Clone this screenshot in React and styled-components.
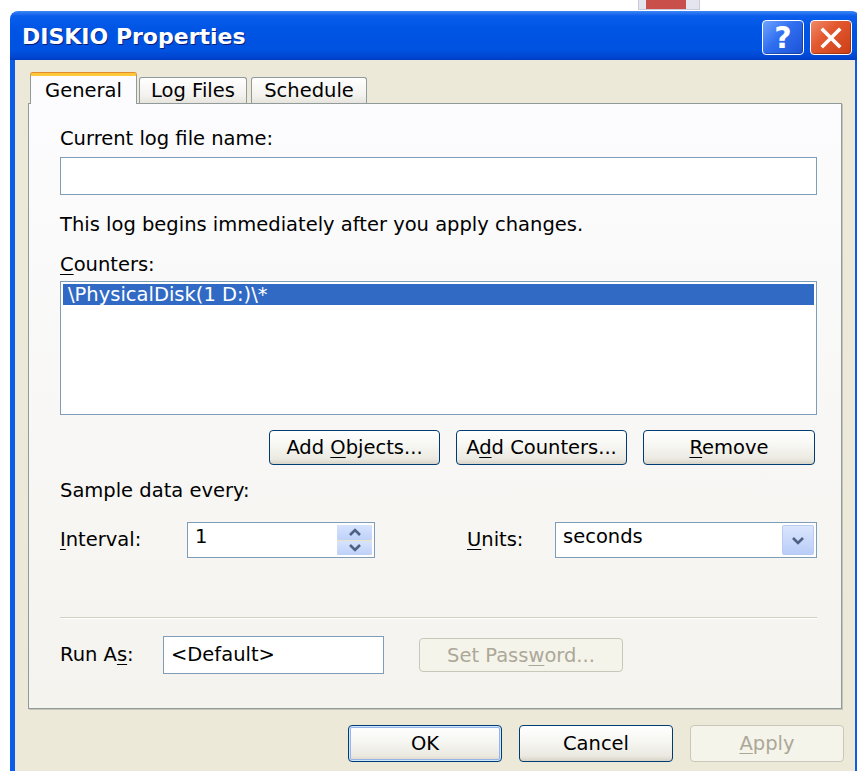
import { createGlobalStyle, styled } from "styled-components";

const GlobalStyle = createGlobalStyle`
  html, body {
    margin: 0;
    padding: 0;
    background: #ffffff;
    overflow: hidden;
  }
  body {
    font-family: "DejaVu Sans", Tahoma, sans-serif;
    font-size: 19.5px;
    color: #000000;
  }
  * {
    box-sizing: border-box;
  }
`;

const Desktop = styled.div`
  width: 857px;
  height: 771px;
  overflow: hidden;
  display: flex;
  flex-direction: column;
  background: #ffffff;
`;

const BackStrip = styled.div`
  height: 11px;
  display: flex;
  align-items: flex-start;
`;

// corner of another window peeking out behind the dialog
const BackWindow = styled.div`
  margin-left: 638px;
  width: 62px;
  height: 10px;
  border: 1px solid #c9cbd9;
  border-top: none;
  background: linear-gradient(
    to right,
    #e4e5ee 0 7px,
    #c9504a 7px 47px,
    #e4e5ee 47px
  );
`;

const Window = styled.div`
  margin-left: 10px;
  width: 850px;
  flex: 1;
  display: flex;
  flex-direction: column;
  border-radius: 8px 8px 0 0;
  overflow: hidden;
`;

const TitleBar = styled.div`
  height: 49px;
  display: flex;
  align-items: center;
  padding: 0 8px 0 12px;
  background: linear-gradient(
    #3d86f4 0%,
    #0b5eec 10%,
    #0055e5 35%,
    #0052e0 80%,
    #0046d2 94%,
    #003cc2 100%
  );
`;

const Title = styled.div`
  flex: 1;
  font-family: "DejaVu Sans", "Trebuchet MS", sans-serif;
  font-weight: bold;
  font-size: 22px;
  color: #ffffff;
  text-shadow: 1px 1px 0 #0a1d7a;
  padding-top: 2px;
`;

const CaptionButtons = styled.div`
  display: flex;
  gap: 6px;
  padding-top: 4px;
`;

const CaptionButton = styled.div`
  width: 42px;
  height: 35px;
  border: 1px solid #ffffff;
  border-radius: 4px;
  display: flex;
  align-items: center;
  justify-content: center;
  color: #ffffff;
  font-weight: bold;
  font-size: 30px;
  font-family: "DejaVu Sans", sans-serif;
  background: ${(p) =>
    p.$close
      ? "linear-gradient(135deg, #f08a6a 0%, #e2582f 40%, #cc3f16 100%)"
      : "linear-gradient(135deg, #6fa3ff 0%, #2f6ef0 45%, #1c52d6 100%)"};
  box-shadow: inset -1px -1px 0 rgba(0, 0, 0, 0.25);
`;

const Body = styled.div`
  flex: 1;
  display: flex;
  flex-direction: column;
  background: #ece9d8;
  border-left: 5px solid #0b5de8;
  border-right: 5px solid #0b5de8;
  padding: 13px 13px 0 13px;
`;

const TabStrip = styled.div`
  height: 31px;
  margin-bottom: -1px;
  display: flex;
  align-items: flex-end;
  padding-left: 2px;
  position: relative;
  z-index: 1;
`;

const Tab = styled.div`
  width: ${(p) => p.$width}px;
  margin-left: ${(p) => p.$gap || 0}px;
  height: ${(p) => (p.$active ? 31 : 26)}px;
  margin-bottom: ${(p) => (p.$active ? 0 : 1)}px;
  border: 1px solid #919b9c;
  border-bottom: none;
  border-radius: 3px 3px 0 0;
  display: flex;
  align-items: center;
  justify-content: center;
  padding-top: ${(p) => (p.$active ? 1 : 0)}px;
  background: ${(p) =>
    p.$active ? "#fcfcfe" : "linear-gradient(#ffffff, #f3f2ee 70%, #e6e4dc)"};
  border-top: ${(p) =>
    p.$active ? "3px solid #ffc83c" : "1px solid #919b9c"};
  box-shadow: ${(p) => (p.$active ? "0 -1px 0 #e68b2c" : "none")};
`;

const Panel = styled.div`
  border: 1px solid #919b9c;
  box-shadow: 1px 1px 0 #c6c4b6;
  background: linear-gradient(#fcfcfe, #f4f3ee);
  padding: 24px 24px 34px 31px;
  display: flex;
  flex-direction: column;
`;

const Label = styled.div`
  line-height: 22px;
  height: 22px;
  margin-top: ${(p) => p.$mt || 0}px;
  white-space: nowrap;
`;

const Key = styled.span`
  text-decoration: underline;
  text-underline-offset: 3px;
  text-decoration-thickness: 1px;
`;

const TextBox = styled.div`
  height: 38px;
  width: ${(p) => (p.$width ? `${p.$width}px` : "100%")};
  margin-top: ${(p) => p.$mt || 0}px;
  border: 1px solid #7f9db9;
  background: #ffffff;
  display: flex;
  align-items: center;
  padding-left: 7px;
  line-height: 22px;
`;

const ListBox = styled.div`
  height: 134px;
  margin-top: 5px;
  border: 1px solid #7f9db9;
  background: #ffffff;
  padding: 2px;
`;

const ListItem = styled.div`
  height: 21px;
  line-height: 21px;
  padding-left: 5px;
  color: ${(p) => (p.$selected ? "#ffffff" : "#000000")};
  background: ${(p) => (p.$selected ? "#316ac5" : "transparent")};
`;

const ButtonRow = styled.div`
  display: flex;
  justify-content: flex-end;
  gap: ${(p) => p.$gap || 16}px;
  margin-top: ${(p) => p.$mt || 0}px;
  margin-right: ${(p) => p.$mr || 0}px;
`;

const Button = styled.button`
  width: ${(p) => p.$width}px;
  height: ${(p) => p.$height || 35}px;
  padding: 0;
  font: inherit;
  color: ${(p) => (p.disabled ? "#aca899" : "#000000")};
  border: 1px solid ${(p) => (p.disabled ? "#c9c7ba" : "#003c74")};
  border-radius: 4px;
  background: ${(p) =>
    p.disabled
      ? "#f5f4ea"
      : "linear-gradient(#ffffff, #f6f6f2 45%, #ebe9e1 85%, #d8d3c7)"};
  box-shadow: ${(p) =>
    p.$default
      ? "inset 0 0 0 1px #cee7ff, inset 0 0 0 2px #98b4e6"
      : "none"};
`;

const Row = styled.div`
  display: flex;
  align-items: center;
  margin-top: ${(p) => p.$mt || 0}px;
`;

const RowLabel = styled.div`
  width: ${(p) => p.$width}px;
  margin-left: ${(p) => p.$ml || 0}px;
  line-height: 22px;
  white-space: nowrap;
`;

const Spin = styled.div`
  width: ${(p) => p.$width}px;
  height: 36px;
  border: 1px solid #7f9db9;
  background: #ffffff;
  display: flex;
  align-items: center;
  padding: 2px 2px 2px 7px;
`;

const SpinValue = styled.div`
  flex: 1;
  line-height: 22px;
  align-self: flex-start;
  padding-top: 1px;
`;

const SpinButtons = styled.div`
  width: 35px;
  height: 100%;
  display: flex;
  flex-direction: column;
  gap: 1px;
  background: #e9e3c6;
`;

const ArrowButton = styled.div`
  flex: 1;
  display: flex;
  align-items: center;
  justify-content: center;
  background: linear-gradient(#d6e3fd, #bfd1f9);
  border-radius: 2px;
`;

const DropButton = styled.div`
  width: 32px;
  height: 100%;
  display: flex;
  align-items: center;
  justify-content: center;
  border: 1px solid #b9cbf3;
  border-radius: 2px;
  background: linear-gradient(#dbe6fd, #b9cdf8);
`;

const Separator = styled.div`
  margin-top: 59px;
  height: 2px;
  border-top: 1px solid #d0d0bf;
  border-bottom: 1px solid #ffffff;
`;

const Chevron = ({ up }) => (
  <svg width="14" height="9" viewBox="0 0 14 9">
    <path
      d={up ? "M2 7 L7 2 L12 7" : "M2 2 L7 7 L12 2"}
      fill="none"
      stroke="#4d6185"
      strokeWidth="2.6"
    />
  </svg>
);

const CloseGlyph = () => (
  <svg width="22" height="22" viewBox="0 0 22 22">
    <path
      d="M3 3 L19 19 M19 3 L3 19"
      stroke="#ffffff"
      strokeWidth="3.6"
      strokeLinecap="square"
    />
  </svg>
);

const App = () => {
  return (
    <>
      <GlobalStyle />
      <Desktop>
        <BackStrip>
          <BackWindow />
        </BackStrip>
        <Window>
          <TitleBar>
            <Title>DISKIO Properties</Title>
            <CaptionButtons>
              <CaptionButton>?</CaptionButton>
              <CaptionButton $close>
                <CloseGlyph />
              </CaptionButton>
            </CaptionButtons>
          </TitleBar>
          <Body>
            <TabStrip>
              <Tab $active $width={107}>
                General
              </Tab>
              <Tab $width={108} $gap={2}>
                Log Files
              </Tab>
              <Tab $width={116} $gap={4}>
                Schedule
              </Tab>
            </TabStrip>
            <Panel>
              <Label>Current log file name:</Label>
              <TextBox $mt={7} />
              <Label $mt={19}>
                This log begins immediately after you apply changes.
              </Label>
              <Label $mt={18}>
                <Key>C</Key>ounters:
              </Label>
              <ListBox>
                <ListItem $selected>{"\\PhysicalDisk(1 D:)\\*"}</ListItem>
              </ListBox>
              <ButtonRow $mt={15} $gap={16} $mr={2}>
                <Button $width={171}>
                  Add <Key>O</Key>bjects...
                </Button>
                <Button $width={171}>
                  A<Key>d</Key>d Counters...
                </Button>
                <Button $width={172}>
                  <Key>R</Key>emove
                </Button>
              </ButtonRow>
              <Label $mt={15}>Sample data every:</Label>
              <Row $mt={20}>
                <RowLabel $width={127}>
                  <Key>I</Key>nterval:
                </RowLabel>
                <Spin $width={188}>
                  <SpinValue>1</SpinValue>
                  <SpinButtons>
                    <ArrowButton>
                      <Chevron up />
                    </ArrowButton>
                    <ArrowButton>
                      <Chevron />
                    </ArrowButton>
                  </SpinButtons>
                </Spin>
                <RowLabel $width={88} $ml={92}>
                  <Key>U</Key>nits:
                </RowLabel>
                <Spin $width={262}>
                  <SpinValue>seconds</SpinValue>
                  <DropButton>
                    <Chevron />
                  </DropButton>
                </Spin>
              </Row>
              <Separator />
              <Row $mt={17}>
                <RowLabel $width={103}>
                  Run A<Key>s</Key>:
                </RowLabel>
                <TextBox $width={221}>&lt;Default&gt;</TextBox>
                <Button $width={204} $height={34} disabled style={{ marginLeft: 35 }}>
                  Set Pass<Key>w</Key>ord...
                </Button>
              </Row>
            </Panel>
            <ButtonRow $mt={16} $gap={17} $mr={-2}>
              <Button $width={154} $height={37} $default>
                OK
              </Button>
              <Button $width={154} $height={37}>
                Cancel
              </Button>
              <Button $width={154} $height={37} disabled>
                <Key>A</Key>pply
              </Button>
            </ButtonRow>
          </Body>
        </Window>
      </Desktop>
    </>
  );
};

export default App;
